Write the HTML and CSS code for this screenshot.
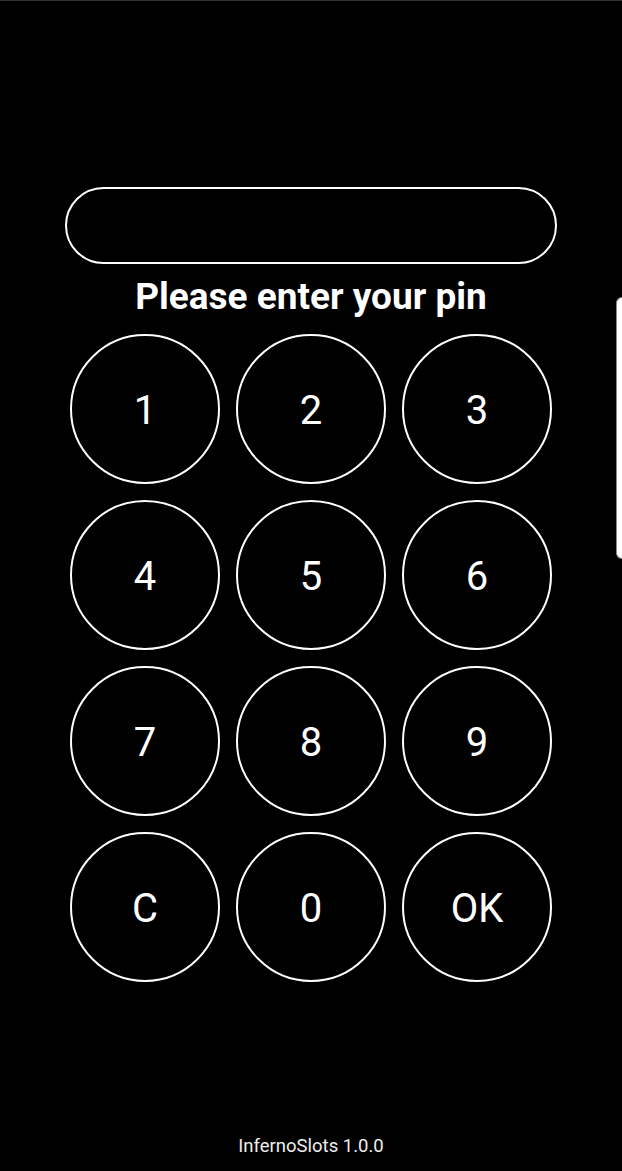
FILE: index.html
```html
<!DOCTYPE html>
<html lang="en">
<head>
  <meta charset="UTF-8" />
  <title>InfernoSlots</title>
  <meta name="viewport" content="width=device-width, initial-scale=1" />
  <link rel="stylesheet" href="styles.css">
</head>
<body>
  <div class="topline"></div>
  <div class="screen">
    <div class="pin-box" id="pin"></div>
    <div class="prompt">Please enter your pin</div>
    <div class="keypad">
      <button class="key">1</button>
      <button class="key">2</button>
      <button class="key">3</button>
      <button class="key">4</button>
      <button class="key">5</button>
      <button class="key">6</button>
      <button class="key">7</button>
      <button class="key">8</button>
      <button class="key">9</button>
      <button class="key">C</button>
      <button class="key">0</button>
      <button class="key">OK</button>
    </div>
  </div>
  <div class="footer">InfernoSlots 1.0.0</div>
  <div class="edge-handle"></div>
</body>
</html>
```

FILE: styles.css
```css
html, body {
  height: 100%;
}
body {
  margin: 0;
  background: #000;
  color: #fff;
  font-family: Roboto, "Noto Sans", sans-serif;
  display: flex;
  flex-direction: column;
  min-height: 100vh;
  box-sizing: border-box;
}
.topline {
  height: 1px;
  background: #333;
}
.screen {
  display: flex;
  flex-direction: column;
  align-items: center;
  padding-top: 186px;
}
.pin-box {
  width: 492px;
  height: 77px;
  box-sizing: border-box;
  border: 2px solid #fff;
  border-radius: 39px;
}
.prompt {
  margin-top: 11px;
  font-size: 37px;
  font-weight: 700;
  line-height: 44px;
  text-align: center;
}
.keypad {
  margin-top: 15px;
  display: grid;
  grid-template-columns: repeat(3, 150px);
  grid-auto-rows: 150px;
  gap: 16px;
}
.key {
  background: #000;
  color: #fff;
  border: 2px solid #fff;
  border-radius: 50%;
  font-family: Roboto, "Noto Sans", sans-serif;
  font-size: 40px;
  padding: 3px 0 0 0;
  display: flex;
  align-items: center;
  justify-content: center;
  cursor: pointer;
}
.footer {
  margin-top: auto;
  padding-bottom: 14px;
  font-size: 18.5px;
  line-height: 22px;
  text-align: center;
  color: #eee;
}
.edge-handle {
  position: fixed;
  right: 0;
  top: 297px;
  width: 5px;
  height: 260px;
  background: #fff;
  border: 1px solid #888;
  border-right: none;
  border-radius: 6px 0 0 6px;
}
```
